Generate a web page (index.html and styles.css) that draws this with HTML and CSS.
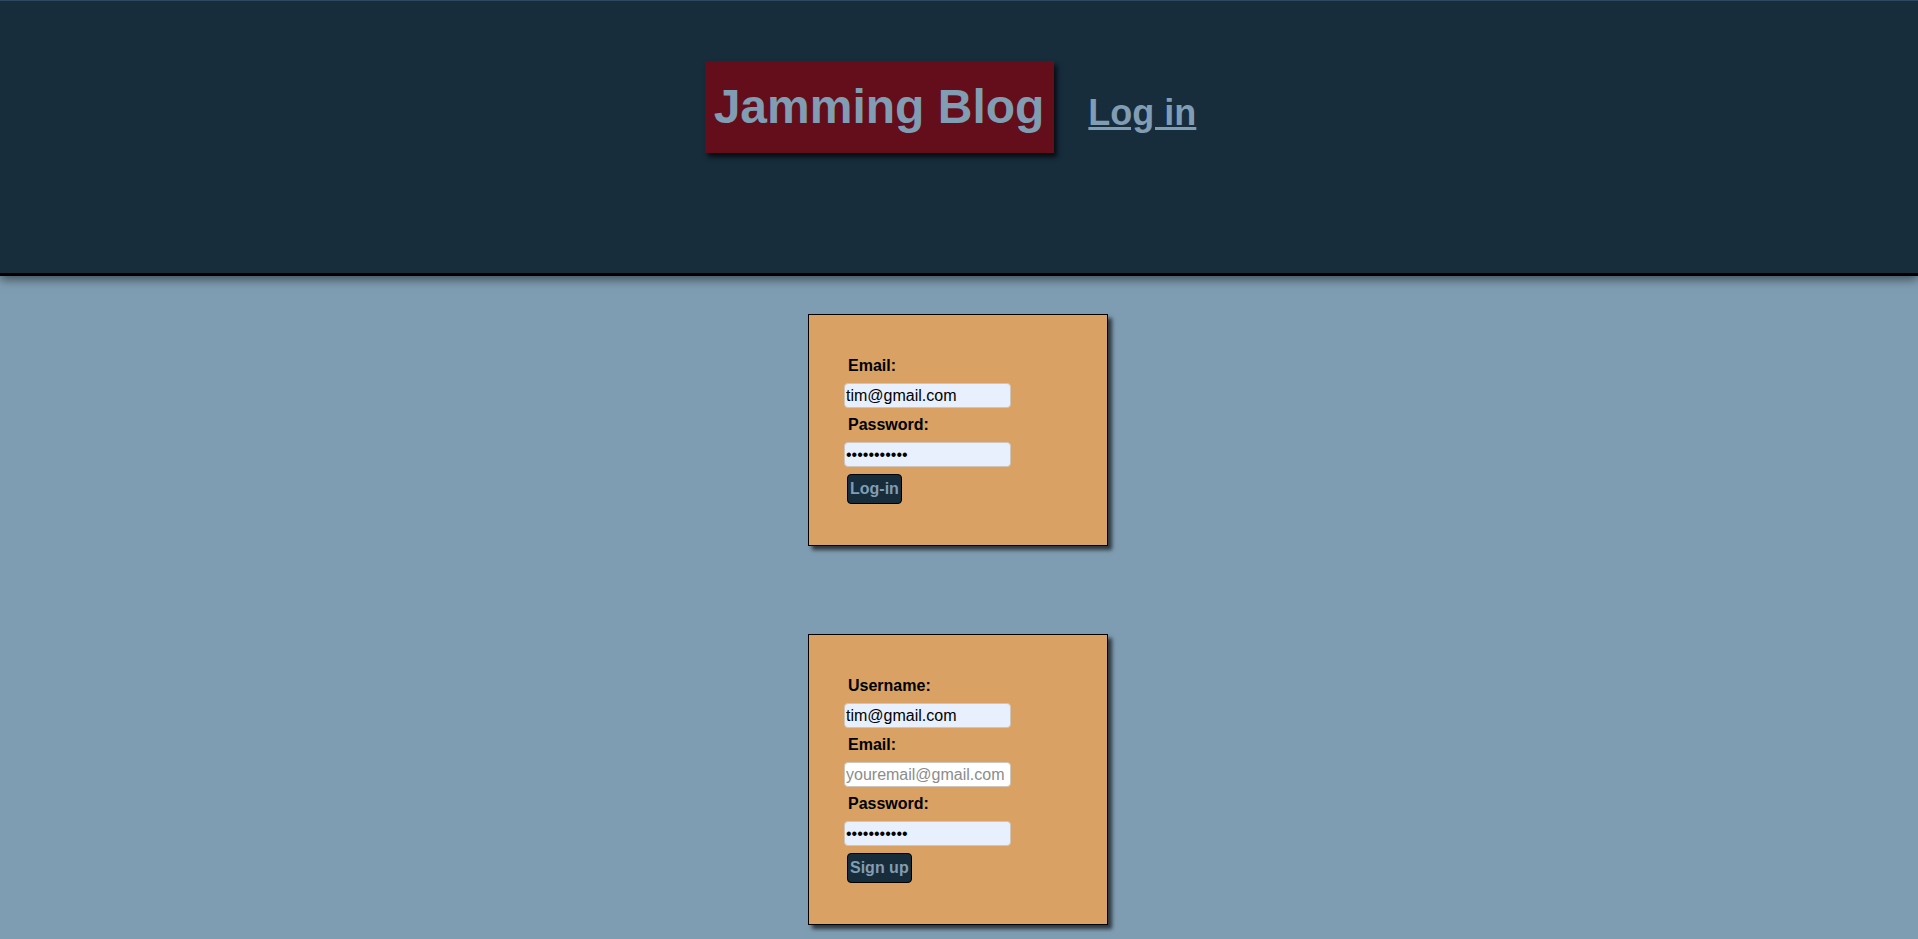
FILE: index.html
```html
<!DOCTYPE html>
<html lang="en">
<head>
<meta charset="utf-8">
<title>Jamming Blog</title>
<link rel="stylesheet" href="styles.css">
</head>
<body>
<header class="site-header">
  <h1 class="brand">Jamming Blog</h1>
  <a class="nav-link" href="#">Log in</a>
</header>
<main class="content">
  <form class="card">
    <label class="field-label" for="login-email">Email:</label>
    <input class="field autofilled" id="login-email" type="email" value="tim@gmail.com">
    <label class="field-label" for="login-pass">Password:</label>
    <input class="field autofilled" id="login-pass" type="password" value="password123">
    <button class="btn" type="button">Log-in</button>
  </form>
  <form class="card">
    <label class="field-label" for="su-user">Username:</label>
    <input class="field autofilled" id="su-user" type="text" value="tim@gmail.com">
    <label class="field-label" for="su-email">Email:</label>
    <input class="field" id="su-email" type="email" placeholder="youremail@gmail.com">
    <label class="field-label" for="su-pass">Password:</label>
    <input class="field autofilled" id="su-pass" type="password" value="password123">
    <button class="btn" type="button">Sign up</button>
  </form>
</main>
</body>
</html>
```
FILE: styles.css
```css
html, body {
  margin: 0;
  padding: 0;
}
body {
  background: #7f9db2;
  font-family: "Liberation Sans", Arial, sans-serif;
  min-height: 939px;
  overflow: hidden;
}
.site-header {
  box-sizing: border-box;
  height: 276px;
  background: #172d3c;
  border-top: 1px solid #2f4a60;
  border-bottom: 3px solid #000;
  box-shadow: 0 3px 10px rgba(0, 0, 0, 0.55);
  display: flex;
  justify-content: center;
  align-items: flex-start;
  gap: 34px;
  padding: 60px 17px 0 0;
  position: relative;
  z-index: 1;
}
.brand {
  margin: 0;
  background: #630e1a;
  color: #809db3;
  font-size: 48px;
  font-weight: bold;
  line-height: 55px;
  padding: 18px 10px 19px 9px;
  box-shadow: 3px 4px 5px rgba(0, 0, 0, 0.75);
}
.nav-link {
  margin-top: 31px;
  color: #809db3;
  font-size: 36px;
  font-weight: bold;
  line-height: 41px;
  text-decoration: underline;
}
.content {
  padding: 38px 2px 0 0;
  display: flex;
  flex-direction: column;
  align-items: center;
  gap: 88px;
}
.card {
  width: 300px;
  box-sizing: border-box;
  background: #d9a264;
  border: 1px solid #000;
  box-shadow: 4px 4px 4px rgba(0, 0, 0, 0.65);
  padding: 42px 35px 41px 35px;
  display: flex;
  flex-direction: column;
  align-items: flex-start;
}
.field-label {
  display: block;
  font-size: 16px;
  font-weight: bold;
  line-height: 18px;
  color: #000;
  margin: 0 0 8px 4px;
}
.field {
  box-sizing: border-box;
  width: 167px;
  height: 25px;
  margin: 0 0 8px 0;
  padding: 0 1px;
  border: 1px solid #cfc6bb;
  border-radius: 4px;
  background: #fff;
  font-family: "Liberation Sans", Arial, sans-serif;
  font-size: 16px;
  color: #000;
  outline: none;
}
.field:last-of-type {
  margin-bottom: 7px;
}
.field.autofilled {
  background: #e8f0fe;
}
.field::placeholder {
  color: #8c8c8c;
}
.btn {
  box-sizing: border-box;
  height: 30px;
  margin-left: 3px;
  padding: 0 2px;
  background: #172d3c;
  color: #809db3;
  border: 1px solid #000;
  border-radius: 4px;
  font-family: "Liberation Sans", Arial, sans-serif;
  font-size: 16px;
  font-weight: bold;
  cursor: pointer;
}
```
